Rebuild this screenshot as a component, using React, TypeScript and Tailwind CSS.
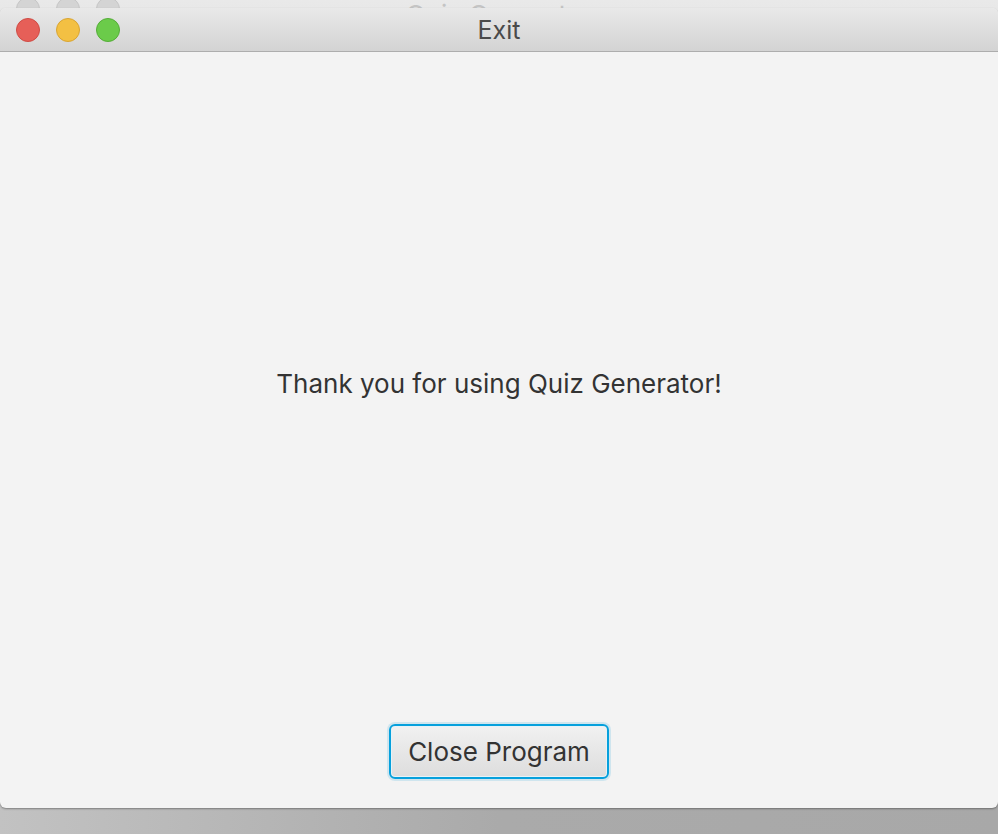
import React from 'react';

const font = { fontFamily: 'Inter, "Noto Sans", sans-serif' };

const TrafficLight: React.FC<{ color: string }> = ({ color }) => (
  <span className={`block w-[24px] h-[24px] rounded-full border ${color}`} />
);

const App: React.FC = () => {
  return (
    <div
      className="relative w-[998px] h-[834px] overflow-hidden bg-gradient-to-r from-[#c2c2c2] via-[#aaaaaa] to-[#a8a8a8]"
      style={font}
    >
      {/* Window behind (Quiz Generator) */}
      <div className="absolute left-0 right-0 top-[-22px] h-[60px] rounded-t-[6px] bg-gradient-to-b from-[#ececec] to-[#e4e4e4] border-t border-[#cfcfcf]">
        <div className="flex items-center gap-[16px] pl-[16px] h-[60px]">
          <span className="block w-[24px] h-[24px] rounded-full bg-[#d4d4d4] border border-[#c6c6c6]" />
          <span className="block w-[24px] h-[24px] rounded-full bg-[#d4d4d4] border border-[#c6c6c6]" />
          <span className="block w-[24px] h-[24px] rounded-full bg-[#d4d4d4] border border-[#c6c6c6]" />
        </div>
      </div>
      <div className="absolute left-0 right-0 top-[2px] flex justify-center text-[26px] leading-none text-[#c4c4c4]">
        Quiz Generator
      </div>

      {/* Exit window */}
      <div className="relative mt-[8px] h-[800px] flex flex-col rounded-[6px] overflow-hidden bg-[#f3f3f3] shadow-[0_1px_2px_rgba(0,0,0,0.35)]">
        <div className="relative h-[44px] shrink-0 flex items-center bg-gradient-to-b from-[#e9e9e9] to-[#d3d3d3] border-b border-[#adadad]">
          <div className="flex items-center gap-[16px] pl-[16px]">
            <TrafficLight color="bg-[#e65f58] border-[#cf4c45]" />
            <TrafficLight color="bg-[#f3c043] border-[#d9a533]" />
            <TrafficLight color="bg-[#6bcb4a] border-[#55ad38]" />
          </div>
          <div className="absolute inset-0 flex items-center justify-center pt-[2px] text-[25px] text-[#4a4a4a]">
            Exit
          </div>
        </div>

        <div className="flex-1 flex items-center justify-center text-[26px] text-[#333333]">
          Thank you for using Quiz Generator!
        </div>

        <div className="flex justify-center pt-[9px] pb-[29px]">
          <button className="h-[55px] px-[17px] rounded-[6px] border-[2px] border-[#06a0dc] bg-gradient-to-b from-[#f1f1f1] to-[#dddddd] text-[26px] text-[#333333] [box-shadow:inset_0_0_0_1px_#e6f2f7,0_0_0_2px_rgba(8,157,214,0.15)]">
            Close Program
          </button>
        </div>
      </div>
    </div>
  );
};

export default App;
